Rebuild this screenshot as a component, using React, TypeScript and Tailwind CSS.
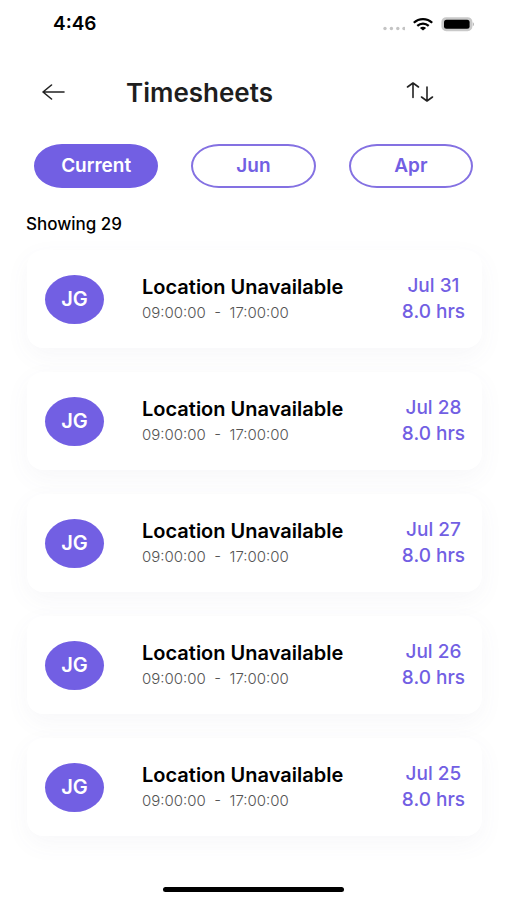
import React from "react";

interface Shift {
  date: string;
  hours: string;
}

const shifts: Shift[] = [
  { date: "Jul 31", hours: "8.0 hrs" },
  { date: "Jul 28", hours: "8.0 hrs" },
  { date: "Jul 27", hours: "8.0 hrs" },
  { date: "Jul 26", hours: "8.0 hrs" },
  { date: "Jul 25", hours: "8.0 hrs" },
];

const tabs = ["Current", "Jun", "Apr"];

const StatusBar = () => {
  return (
    <div className="flex h-12 items-center justify-between pl-[53px] pr-8 text-black">
      <span className="text-[19px] font-semibold">4:46</span>
      <div className="flex items-center gap-2">
        <svg className="h-4 w-6" viewBox="0 0 24 16" fill="#c4c4c4">
          <circle cx="4" cy="12.5" r="1.7" />
          <circle cx="10.400" cy="12.5" r="1.7" />
          <circle cx="16.800" cy="12.5" r="1.7" />
          <circle cx="23" cy="12.5" r="1.7" />
        </svg>
        <svg className="h-4 w-5" viewBox="0 0 20 16" fill="none" stroke="black" strokeWidth="2.2">
          <path d="M.8 6.800C6 1.800 14 1.800 19.200 6.800" />
          <path d="M4.300 9.900c3.300-3 8.100-3 11.400 0" />
          <path d="M6.900 11.900c1.800-1.500 4.400-1.500 6.200 0L10 14.500z" fill="black" stroke="none" />
        </svg>
        <svg className="h-4 w-[34px]" viewBox="0 0 34 16">
          <rect x="1.200" y="2" width="29.400" height="12.400" rx="4" fill="#c9c9c9" stroke="#c9c9c9" strokeWidth="1.600" />
          <rect x="3" y="3.800" width="25.600" height="9" rx="2.500" fill="#000" />
          <path d="M31.800 6.200c1.600.7 1.600 3.300 0 4z" fill="#b5b5b5" />
        </svg>
      </div>
    </div>
  );
};

const ShiftCard = (props: Shift) => {
  return (
    <li className="flex h-[98px] items-center rounded-2xl bg-white pl-[18px] pr-[17px] shadow-[0_8px_24px_rgba(90,90,140,0.05)]">
      <div className="flex h-[49px] w-[59px] shrink-0 items-center justify-center rounded-[50%] bg-[#725fe3] text-xl font-semibold text-white">
        JG
      </div>
      <div className="ml-[38px] flex-1">
        <h2 className="text-xl leading-7 font-semibold whitespace-nowrap text-black">Location Unavailable</h2>
        <p className="text-[15px] leading-6 font-light whitespace-pre text-[#555555]">09:00:00  -  17:00:00</p>
      </div>
      <div className="text-center text-[19px] leading-[26px] font-medium whitespace-nowrap text-[#725fe3]">
        <p>{props.date}</p>
        <p>{props.hours}</p>
      </div>
    </li>
  );
};

const App = () => {
  return (
    <div className="flex min-h-screen flex-col overflow-hidden bg-white font-['Inter',sans-serif]">
      <StatusBar />
      <header className="flex h-[88px] items-center pl-[42px] pr-[73px]">
        <button type="button" aria-label="Back">
          <svg className="h-5 w-6" viewBox="0 0 24 20" fill="none" stroke="#222" strokeWidth="1.6" strokeLinecap="round" strokeLinejoin="round">
            <path d="M22 10H1M9.500 3L1 10l8.500 7" />
          </svg>
        </button>
        <h1 className="ml-[60px] flex-1 text-[26px] font-semibold text-[#1e1e1e]">Timesheets</h1>
        <button type="button" aria-label="Sort">
          <svg className="h-5 w-7" viewBox="0 0 28 20" fill="none" stroke="#222" strokeWidth="1.6" strokeLinecap="round" strokeLinejoin="round">
            <path d="M7 15.500V1M1.500 5L7 1l5.500 4" />
            <path d="M21 5v14M15.500 15l5.500 4 5.500-4" />
          </svg>
        </button>
      </header>
      <nav className="mt-2 grid grid-cols-3 gap-[33px] px-[34px]">
        {tabs.map((tab, index) => (
          <button
            key={tab}
            type="button"
            className={
              index === 0
                ? "h-11 rounded-[28px/22px] border-2 border-[#725fe3] bg-[#725fe3] text-[19px] font-semibold text-white"
                : "h-11 rounded-[28px/22px] border-2 border-[#8471e2] text-[19px] font-semibold text-[#725fe3]"
            }
          >
            {tab}
          </button>
        ))}
      </nav>
      <main className="mt-6 pb-6">
        <p className="px-[26px] text-[17px] leading-6 font-medium text-black">Showing 29</p>
        <ul className="mt-[14px] flex flex-col gap-6 pr-[25px] pl-[27px]">
          {shifts.map((shift) => (
            <ShiftCard key={shift.date} date={shift.date} hours={shift.hours} />
          ))}
        </ul>
      </main>
      <footer className="relative flex flex-1 items-end justify-center bg-white pb-2">
        <div className="h-[5px] w-[181px] rounded-full bg-black" />
      </footer>
    </div>
  );
};

export default App;
